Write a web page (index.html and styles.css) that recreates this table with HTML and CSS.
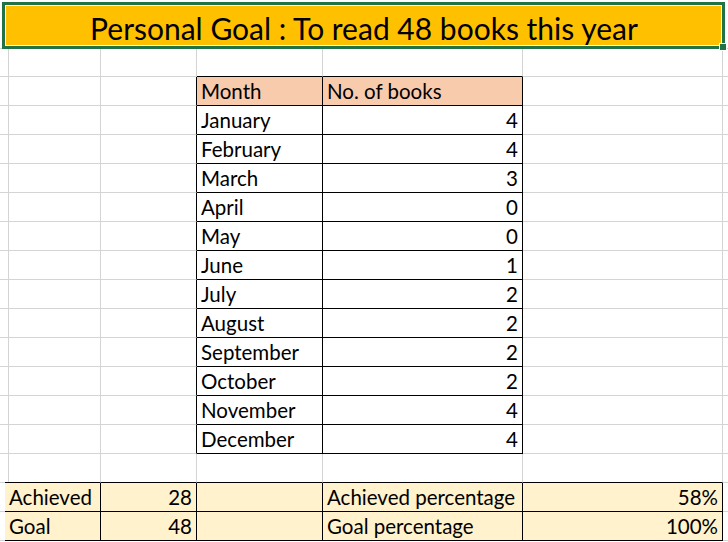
FILE: index.html
```html
<!DOCTYPE html>
<html>
<head>
<meta charset="utf-8">
<link rel="stylesheet" href="styles.css">
</head>
<body>
<div class="sheet">
  <div class="strip"></div>

  <div class="c"></div>
  <div class="banner"><span class="title">Personal Goal : To read 48 books this year</span><div class="sel"><div class="handle"></div></div></div>
  <div class="c"></div>

  <div class="c"></div><div class="c"></div><div class="c"></div><div class="c bb"></div><div class="c bb"></div><div class="c"></div><div class="c"></div>

  <div class="c"></div><div class="c"></div><div class="c br"></div><div class="c br bb hd">Month</div><div class="c br bb hd">No. of books</div><div class="c"></div><div class="c"></div>
  <div class="c"></div><div class="c"></div><div class="c br"></div><div class="c br bb">January</div><div class="c br bb num">4</div><div class="c"></div><div class="c"></div>
  <div class="c"></div><div class="c"></div><div class="c br"></div><div class="c br bb">February</div><div class="c br bb num">4</div><div class="c"></div><div class="c"></div>
  <div class="c"></div><div class="c"></div><div class="c br"></div><div class="c br bb">March</div><div class="c br bb num">3</div><div class="c"></div><div class="c"></div>
  <div class="c"></div><div class="c"></div><div class="c br"></div><div class="c br bb">April</div><div class="c br bb num">0</div><div class="c"></div><div class="c"></div>
  <div class="c"></div><div class="c"></div><div class="c br"></div><div class="c br bb">May</div><div class="c br bb num">0</div><div class="c"></div><div class="c"></div>
  <div class="c"></div><div class="c"></div><div class="c br"></div><div class="c br bb">June</div><div class="c br bb num">1</div><div class="c"></div><div class="c"></div>
  <div class="c"></div><div class="c"></div><div class="c br"></div><div class="c br bb">July</div><div class="c br bb num">2</div><div class="c"></div><div class="c"></div>
  <div class="c"></div><div class="c"></div><div class="c br"></div><div class="c br bb">August</div><div class="c br bb num">2</div><div class="c"></div><div class="c"></div>
  <div class="c"></div><div class="c"></div><div class="c br"></div><div class="c br bb">September</div><div class="c br bb num">2</div><div class="c"></div><div class="c"></div>
  <div class="c"></div><div class="c"></div><div class="c br"></div><div class="c br bb">October</div><div class="c br bb num">2</div><div class="c"></div><div class="c"></div>
  <div class="c"></div><div class="c"></div><div class="c br"></div><div class="c br bb">November</div><div class="c br bb num">4</div><div class="c"></div><div class="c"></div>
  <div class="c"></div><div class="c"></div><div class="c br"></div><div class="c br bb">December</div><div class="c br bb num">4</div><div class="c"></div><div class="c"></div>

  <div class="c"></div><div class="c bb"></div><div class="c bb"></div><div class="c bb"></div><div class="c bb"></div><div class="c bb"></div><div class="c"></div>

  <div class="c br"></div><div class="c br bb sum">Achieved</div><div class="c br bb sum num">28</div><div class="c br bb sum"></div><div class="c br bb sum">Achieved percentage</div><div class="c br bb sum num">58%</div><div class="c"></div>
  <div class="c br"></div><div class="c br bb sum">Goal</div><div class="c br bb sum num">48</div><div class="c br bb sum"></div><div class="c br bb sum">Goal percentage</div><div class="c br bb sum num">100%</div><div class="c"></div>
</div>
</body>
</html>
```

FILE: styles.css
```css
html, body {
  margin: 0;
  padding: 0;
  background: #fff;
}
body {
  width: 728px;
  height: 542px;
  overflow: hidden;
  font-family: Lato, "Liberation Sans", sans-serif;
  color: #000;
}
.sheet {
  display: grid;
  grid-template-columns: 5px 96px 96px 126px 200px 200px 5px;
  grid-template-rows: 5px 44px 28px;
  grid-auto-rows: 29px;
}
.strip {
  grid-column: 1 / -1;
}
.c {
  box-sizing: border-box;
  border-right: 1px solid #d4d4d4;
  border-bottom: 1px solid #d4d4d4;
  font-size: 20.5px;
  line-height: 28px;
  padding: 0 4px;
  white-space: nowrap;
  overflow: hidden;
}
.br { border-right-color: #000; }
.bb { border-bottom-color: #000; }
.num { text-align: right; }
.hd { background: #f8cbad; }
.sum { background: #fff2cc; }
.banner {
  grid-column: span 5;
  position: relative;
  background: #ffc000;
  display: flex;
  align-items: center;
  justify-content: center;
}
.title {
  font-size: 30px;
  line-height: 34px;
  padding-top: 1px;
}
.sel {
  position: absolute;
  top: -3px;
  left: -3px;
  right: -2px;
  bottom: 0;
  border: 3px solid #217346;
  box-shadow: inset 0 0 0 1px #fff;
}
.handle {
  position: absolute;
  right: -5px;
  bottom: -5px;
  width: 6px;
  height: 6px;
  background: #217346;
  border: 1px solid #fff;
}
```
